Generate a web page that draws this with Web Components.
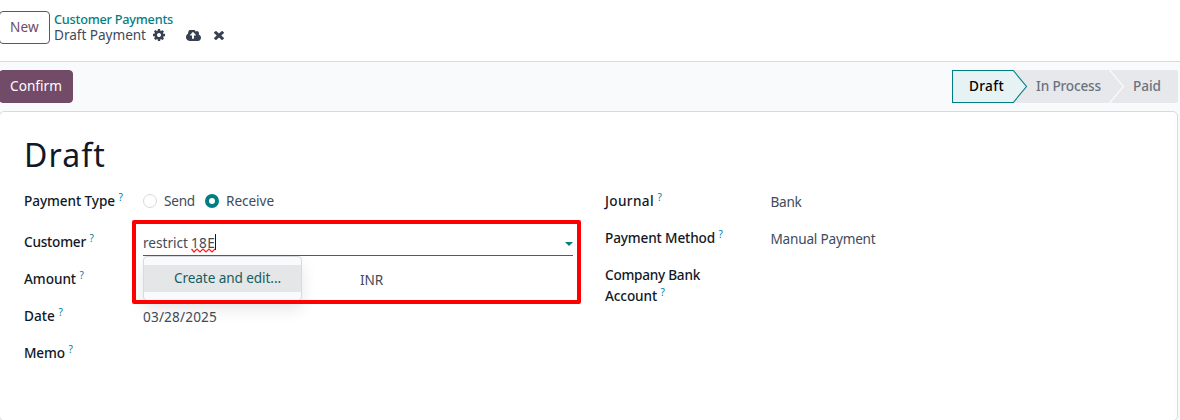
<!DOCTYPE html>
<html lang="en">
<head>
<meta charset="utf-8">
<title>Draft Payment</title>
<style>
html,body{margin:0;height:100%;overflow:hidden;background:#fff}
body{font-family:"Noto Sans","Open Sans",sans-serif;font-size:13.6px;line-height:21px;color:#414b5a}
</style>
</head>
<body>
<payment-page></payment-page>
<script>
const define = (name, html, setup) => {
  const t = document.createElement('template');
  t.innerHTML = html;
  customElements.define(name, class extends HTMLElement {
    connectedCallback() {
      if (this.shadowRoot) return;
      this.attachShadow({mode: 'open'}).append(t.content.cloneNode(true));
      if (setup) setup(this, this.shadowRoot);
    }
  });
};

/* Single line of text tracked to a given width */
define('fit-text', `<style>:host{display:inline-block;white-space:nowrap}span{display:inline-block}</style><span><slot></slot></span>`,
  (el, root) => {
    const w = +el.getAttribute('w'), span = root.querySelector('span');
    el.style.width = w + 'px';
    span.style.letterSpacing = (w - span.getBoundingClientRect().width) / el.textContent.length + 'px';
  });

define('ui-icon', `<style>:host{display:block}svg{display:block;width:100%;height:100%;fill:#374151;fill-rule:evenodd}</style><svg preserveAspectRatio="none"><path/></svg>`,
  (el, root) => {
    const icons = {
      cog: ['0 128 1536 1536', 'M1024 896q0 106-75 181t-181 75-181-75-75-181 75-181 181-75 181 75 75 181zm512-109v222q0 12-8 23t-20 13l-185 28q-19 54-39 91 35 50 107 138 10 12 10 25t-9 23q-27 37-99 108t-94 71q-12 0-26-9l-138-108q-44 23-91 38-16 136-29 186-7 28-36 28h-222q-14 0-24.500-8.500t-11.500-21.500l-28-184q-49-16-90-37l-141 107q-10 9-25 9-14 0-25-11-126-114-165-168-7-10-7-23 0-12 8-23 15-21 51-66.500t54-70.500q-27-50-41-99l-183-27q-13-2-21-12.500t-8-23.500v-222q0-12 8-23t19-13l186-28q14-46 39-92-40-57-107-138-10-12-10-24 0-10 9-23 26-36 98.500-107.500t94.500-71.500q13 0 26 10l138 107q44-23 91-38 16-136 29-186 7-28 36-28h222q14 0 24.500 8.500t11.500 21.500l28 184q49 16 90 37l142-107q9-9 24-9 13 0 25 10 129 119 165 170 7 8 7 22 0 12-8 23-15 21-51 66.500t-54 70.500q26 50 41 98l183 28q13 2 21 12.500t8 23.500z'],
      cloud: ['0 256 1920 1280', 'M1280 864q0-14-9-23l-352-352q-9-9-23-9t-23 9l-351 351q-10 12-10 24 0 14 9 23t23 9h224v352q0 13 9.500 22.500t22.500 9.500h192q13 0 22.500-9.500t9.500-22.500v-352h224q13 0 22.500-9.500t9.500-22.500zm640 288q0 159-112.500 271.500t-271.500 112.500h-1088q-185 0-316.500-131.500t-131.500-316.500q0-130 70-240t188-165q-2-30-2-43 0-212 150-362t362-150q156 0 285.500 87t188.500 231q71-62 166-62 106 0 181 75t75 181q0 76-41 138 130 31 213.500 135.500t83.500 238.500z'],
      times: ['302 366 1188 1188', 'M1490 1322q0 40-28 68l-136 136q-28 28-68 28t-68-28l-294-294-294 294q-28 28-68 28t-68-28l-136-136q-28-28-28-68t28-68l294-294-294-294q-28-28-28-68t28-68l136-136q28-28 68-28t68 28l294 294 294-294q28-28 68-28t68 28l136 136q28 28 28 68t-28 68l-294 294 294 294q28 28 28 68z']
    };
    const [box, d] = icons[el.getAttribute('name')];
    root.querySelector('svg').setAttribute('viewBox', box);
    root.querySelector('path').setAttribute('d', d);
  });

define('ui-button', `<style>
:host{display:flex;align-items:center;box-sizing:border-box;height:33px;padding:0 10px 2px;border:1px solid #714b67;border-radius:4px;font-weight:450;color:#714b67;background:#fff}
:host([primary]){background:#714b67;color:#fff}
</style><slot></slot>`);

define('control-panel', `<style>
:host{display:flex;box-sizing:border-box;height:62px;padding-top:11px;border-bottom:1px solid #d8dadd;background:#fff}
ui-button{width:51px;margin-left:-1px}
.crumbs{margin-left:4px;display:flex;flex-direction:column}
.top{font-weight:500;font-size:12.7px;line-height:15px;color:#017e84;height:15px;padding-top:1px}
.now{display:flex;align-items:center;height:17px;line-height:15px}
.now fit-text{margin-top:-2px}
</style>
<ui-button><fit-text w="29">New</fit-text></ui-button>
<div class="crumbs">
 <div class="top"><fit-text w="119">Customer Payments</fit-text></div>
 <div class="now"><fit-text w="92">Draft Payment</fit-text>
  <ui-icon name="cog" style="width:12px;height:12px;margin:-1px 0 0 7px"></ui-icon>
  <ui-icon name="cloud" style="width:15px;height:11px;margin:-1px 0 0 21px"></ui-icon>
  <ui-icon name="times" style="width:10px;height:9px;margin:0 0 0 13px"></ui-icon></div>
</div>`);

define('status-steps', `<style>
:host{display:grid;width:226px;height:33px;margin-right:2px;font-weight:500;color:#6b7280}
svg,.labels{grid-area:1/1}
.labels{display:flex;align-items:center;padding-left:17px;height:30px;position:relative}
.on{color:#000}
</style>
<svg width="226" height="33" viewBox="0 0 226 33">
 <path d="M60 0H224a2 2 0 0 1 2 2V31a2 2 0 0 1-2 2H60z" fill="#e7e8eb"/>
 <path d="M157.500 0L171.500 16.500L157.500 33" fill="none" stroke="#f9fafb" stroke-width="1.300"/>
 <path d="M.5.5H61.300L74.500 16.500L61.300 32.500H.5z" fill="#e6f2f3" stroke="#017e84" stroke-width="1.100"/>
</svg>
<div class="labels"><fit-text class="on" w="35">Draft</fit-text><fit-text w="65" style="margin-left:32px">In Process</fit-text><fit-text w="28" style="margin-left:32px">Paid</fit-text></div>`);

define('status-bar', `<style>
:host{display:flex;justify-content:space-between;box-sizing:border-box;height:49px;padding-top:8px}
ui-button{width:74px;margin-left:-1px}
</style>
<ui-button primary><fit-text w="52">Confirm</fit-text></ui-button><status-steps></status-steps>`);

define('field-row', `<style>
:host{display:grid;grid-template-columns:var(--label,119px) 1fr;height:37px}
.l{font-weight:500;color:#111827}
.v{padding-top:1px;position:relative}
</style><div class="l"><slot name="label"></slot></div><div class="v"><slot></slot></div>`);

define('help-mark', `<style>:host{display:inline-block;font-size:10px;font-weight:400;line-height:10px;color:#0180a5;vertical-align:5px;margin-left:3.500px}</style>?`);

define('radio-option', `<style>
:host{display:flex;align-items:center;height:20px}
i{box-sizing:border-box;width:14px;height:14px;border:1px solid #d8dadd;border-radius:50%;margin:2px 7px 0 0}
:host([checked]) i{border:4px solid #017e84}
</style><i></i><slot></slot>`);

define('partner-input', `<style>
:host{display:block;position:relative;width:430px;height:23px;border-bottom:1px solid #017e84}
.t{display:flex;align-items:flex-start}
.bad{position:relative;margin-left:3px}
.bad svg{position:absolute;left:0;top:16px}
.caret{width:1px;height:16px;margin-top:2px;background:#111827}
.arrow{position:absolute;right:0;top:10px}
</style>
<div class="t"><fit-text w="45">restrict</fit-text><span class="bad"><fit-text w="24">18E</fit-text>
<svg width="25" height="5" viewBox="0 0 25 5"><path d="M.5 1L3 4L6 1L9 4L12 1L15 4L18 1L21 4L24 1" fill="none" stroke="#f22" stroke-width="1.200"/></svg></span><span class="caret"></span></div>
<svg class="arrow" width="8" height="4"><path d="M0 0H8L4 4z" fill="#017e84"/></svg>
<slot></slot>`);

define('drop-menu', `<style>
:host{position:absolute;left:0;top:24px;z-index:1;box-sizing:border-box;width:159px;height:45px;padding:8px 0;border:1px solid #d8dadd;border-radius:4px;background:#f9fafb;box-shadow:0 8px 16px rgba(0,0,0,.1)}
div{height:27px;line-height:26px;padding-left:30px;background:#e5e6e8;color:#155e5f}
</style><div><slot></slot></div>`);

define('payment-form', `<style>
:host{display:block;box-sizing:border-box;width:1179px;height:310px;margin-left:-1px;padding:23px 24px 0;border:1px solid #d8dadd;border-radius:5px;background:#fff;position:relative}
h1{margin:0;font-size:32px;font-weight:450;line-height:40px;color:#111827;height:55px}
.cols{display:grid;grid-template-columns:581px 1fr}
.r{--label:165.500px}
.radios{display:flex;gap:10px;margin-top:-1px}
.amount{padding-left:217px}
.mark{position:absolute;left:132px;top:108px;width:441px;height:76px;border:4px solid #fe0000;border-radius:2px;z-index:3}
</style>
<h1><fit-text w="82">Draft</fit-text></h1>
<div class="cols">
<div>
 <field-row style="height:41px"><span slot="label"><fit-text w="91">Payment Type</fit-text><help-mark></help-mark></span><div class="radios"><radio-option><fit-text w="31">Send</fit-text></radio-option><radio-option checked><fit-text w="48">Receive</fit-text></radio-option></div></field-row>
 <field-row><span slot="label"><fit-text w="62">Customer</fit-text><help-mark></help-mark></span><partner-input><drop-menu><fit-text w="107">Create and edit...</fit-text></drop-menu></partner-input></field-row>
 <field-row><span slot="label"><fit-text w="52">Amount</fit-text><help-mark></help-mark></span><div class="amount"><fit-text w="23">INR</fit-text></div></field-row>
 <field-row><span slot="label"><fit-text w="31">Date</fit-text><help-mark></help-mark></span><fit-text w="74">03/28/2025</fit-text></field-row>
 <field-row><span slot="label"><fit-text w="41">Memo</fit-text><help-mark></help-mark></span></field-row>
</div>
<div class="r">
 <field-row><span slot="label"><fit-text w="49">Journal</fit-text><help-mark></help-mark></span><fit-text w="31">Bank</fit-text></field-row>
 <field-row><span slot="label"><fit-text w="110">Payment Method</fit-text><help-mark></help-mark></span><fit-text w="105">Manual Payment</fit-text></field-row>
 <field-row><span slot="label"><fit-text w="95">Company Bank</fit-text><br><fit-text w="52">Account</fit-text><help-mark></help-mark></span></field-row>
</div>
</div>
<div class="mark"></div>`);

define('payment-page', `<style>:host{display:block;width:1180px;height:420px;overflow:hidden;background:#f9fafb}</style>
<control-panel></control-panel><status-bar></status-bar><payment-form></payment-form>`);
</script>
</body>
</html>
